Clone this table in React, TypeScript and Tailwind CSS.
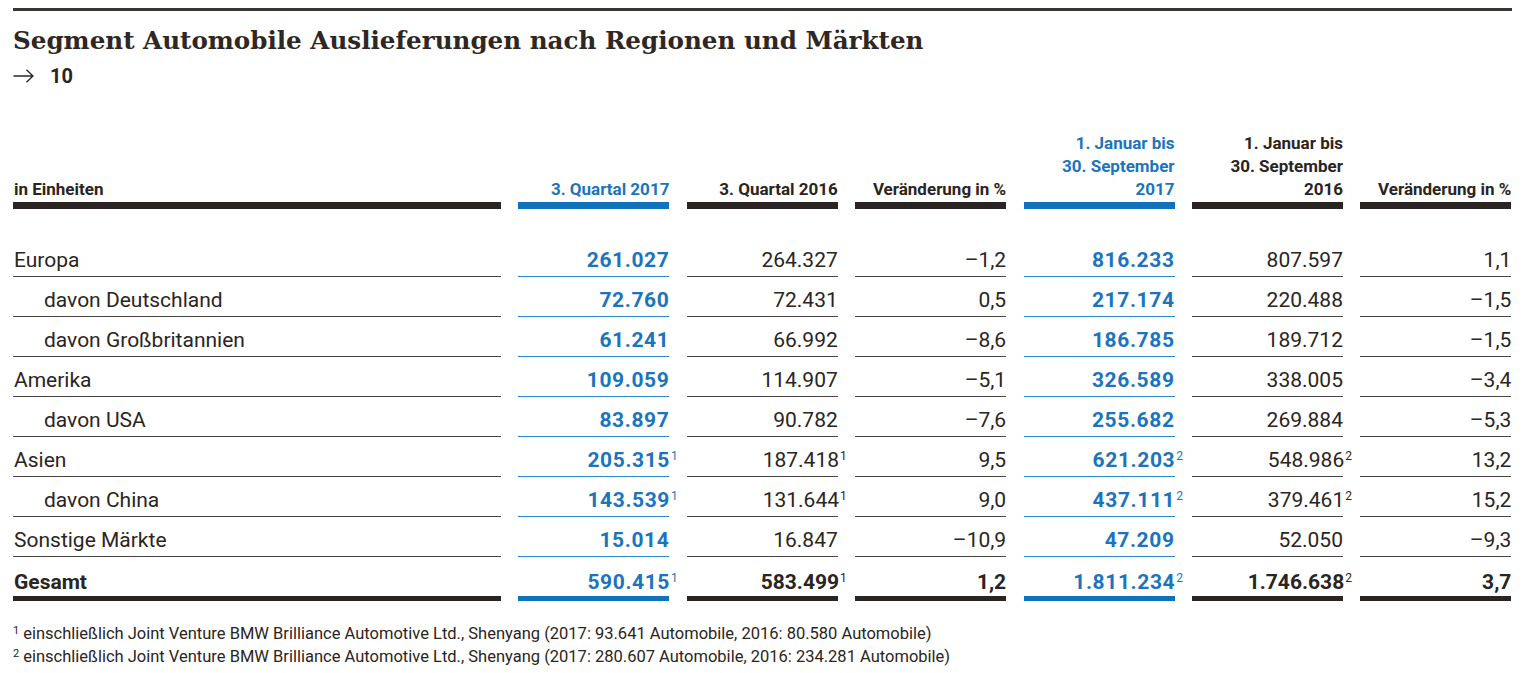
import React from 'react';

type Row = {
  label: string;
  indent?: boolean;
  total?: boolean;
  values: [string, string, string, string, string, string];
  notes?: [string?, string?, string?, string?];
};

const rows: Row[] = [
  { label: 'Europa', values: ['261.027', '264.327', '–1,2', '816.233', '807.597', '1,1'] },
  { label: 'davon Deutschland', indent: true, values: ['72.760', '72.431', '0,5', '217.174', '220.488', '–1,5'] },
  { label: 'davon Großbritannien', indent: true, values: ['61.241', '66.992', '–8,6', '186.785', '189.712', '–1,5'] },
  { label: 'Amerika', values: ['109.059', '114.907', '–5,1', '326.589', '338.005', '–3,4'] },
  { label: 'davon USA', indent: true, values: ['83.897', '90.782', '–7,6', '255.682', '269.884', '–5,3'] },
  { label: 'Asien', values: ['205.315', '187.418', '9,5', '621.203', '548.986', '13,2'], notes: ['1', '1', '2', '2'] },
  { label: 'davon China', indent: true, values: ['143.539', '131.644', '9,0', '437.111', '379.461', '15,2'], notes: ['1', '1', '2', '2'] },
  { label: 'Sonstige Märkte', values: ['15.014', '16.847', '–10,9', '47.209', '52.050', '–9,3'] },
  { label: 'Gesamt', total: true, values: ['590.415', '583.499', '1,2', '1.811.234', '1.746.638', '3,7'], notes: ['1', '1', '2', '2'] },
];

const blueCols = [0, 3];

function Note({ n }: { n?: string }) {
  if (!n) return null;
  return <span className="relative -top-[7px] -mr-[9px] ml-[1px] text-[12px] leading-none font-normal">{n}</span>;
}

export default function App() {
  const sans = "font-['Roboto','Liberation_Sans',sans-serif]";
  return (
    <div className={`min-h-screen bg-white text-[#2a2522] pl-[13px] pt-[8px] ${sans}`}>
      <div className="w-[1499px]">
        <div className="h-[3px] bg-[#3a3633]" />
        <h1 className="mt-[14px] text-[24.6px] leading-[32px] font-bold text-[#2e2724] font-['DejaVu_Serif','Liberation_Serif',serif]">
          Segment Automobile Auslieferungen nach Regionen und Märkten
        </h1>
        <div className="mt-[7px] flex items-center gap-[16px] h-[24px]">
          <svg width="21" height="14" viewBox="0 0 21 14" className="text-[#2a2522]">
            <path d="M0.5 7H20M13.5 0.8L20 7L13.5 13.2" fill="none" stroke="currentColor" strokeWidth="1.3" />
          </svg>
          <span className="text-[20px] font-bold leading-[24px]">10</span>
        </div>

        <div className="mt-[44px] grid grid-cols-[488px_repeat(6,151px)] gap-x-[17.4px]">
          {/* header */}
          <HeaderCell left>in Einheiten</HeaderCell>
          <HeaderCell blue>3. Quartal 2017</HeaderCell>
          <HeaderCell>3. Quartal 2016</HeaderCell>
          <HeaderCell>Veränderung in %</HeaderCell>
          <HeaderCell blue>
            1. Januar bis
            <br />
            30. September
            <br />
            2017
          </HeaderCell>
          <HeaderCell>
            1. Januar bis
            <br />
            30. September
            <br />
            2016
          </HeaderCell>
          <HeaderCell>Veränderung in %</HeaderCell>

          <div className="col-span-7 h-[28px]" />

          {rows.map((r) => (
            <React.Fragment key={r.label}>
              <div
                className={`text-[21px] leading-[24px] ${
                  r.total ? 'pt-[13px] pb-[2px] border-b-[5px] border-[#2a2522] font-bold' : 'pt-[11px] pb-[4px] border-b border-[#4a4542]'
                } ${r.indent ? 'pl-[31px]' : 'pl-[1px]'}`}
              >
                {r.label}
              </div>
              {r.values.map((v, i) => {
                const blue = blueCols.includes(i);
                const noteIdx = i < 2 ? i : i === 3 ? 2 : i === 4 ? 3 : -1;
                const n = r.notes && noteIdx >= 0 ? r.notes[noteIdx] : undefined;
                const border = r.total
                  ? blue
                    ? 'pt-[13px] pb-[2px] border-b-[5px] border-[#0f73bb]'
                    : 'pt-[13px] pb-[2px] border-b-[5px] border-[#2a2522]'
                  : blue
                  ? 'pt-[11px] pb-[4px] border-b border-[#2f86c8]'
                  : 'pt-[11px] pb-[4px] border-b border-[#4a4542]';
                return (
                  <div
                    key={i}
                    className={`text-right text-[21px] leading-[24px] whitespace-nowrap ${border} ${
                      blue ? 'text-[#1b75bc] font-bold tracking-[0.6px]' : ''
                    } ${r.total ? 'font-bold' : ''}`}
                  >
                    {v}
                    <Note n={n} />
                  </div>
                );
              })}
            </React.Fragment>
          ))}
        </div>

        <div className="mt-[21px] text-[16.5px] leading-[23px]">
          <p>
            <span className="relative -top-[5px] text-[11px] leading-none mr-[4px]">1</span>einschließlich Joint Venture BMW Brilliance
            Automotive Ltd., Shenyang (2017: 93.641 Automobile, 2016: 80.580 Automobile)
          </p>
          <p>
            <span className="relative -top-[5px] text-[11px] leading-none mr-[4px]">2</span>einschließlich Joint Venture BMW Brilliance
            Automotive Ltd., Shenyang (2017: 280.607 Automobile, 2016: 234.281 Automobile)
          </p>
        </div>
      </div>
    </div>
  );
}

function HeaderCell({ children, blue, left }: { children: React.ReactNode; blue?: boolean; left?: boolean }) {
  return (
    <div
      className={`flex flex-col justify-end pb-[1px] border-b-[7px] text-[17px] leading-[23px] font-bold ${
        left ? 'text-left pl-[1px]' : 'text-right'
      } ${blue ? 'text-[#1b75bc] border-[#0f73bb]' : 'border-[#2a2522]'}`}
    >
      <div>{children}</div>
    </div>
  );
}
